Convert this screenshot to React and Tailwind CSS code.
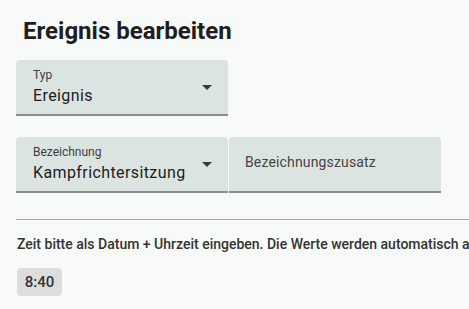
function DropArrow() {
  return (
    <svg width="24" height="24" viewBox="0 0 24 24" className="shrink-0 text-[#3a3a3a]">
      <path d="M7 10l5 5 5-5z" fill="currentColor" />
    </svg>
  );
}

function SelectField({ label, value }) {
  return (
    <div className="flex w-[212px] items-center rounded-t-[4px] border-b-2 border-[#858e8c] bg-[#dce4e2] pl-[17px] pr-[9px]">
      <div className="flex-1 pt-[7px] pb-[6px]">
        <div className="text-[12px] leading-[16px] text-[#3c3c3c]">{label}</div>
        <div className="mt-px text-[16px] leading-[24px] tracking-[0.4px] text-[#1c1c1c]">{value}</div>
      </div>
      <DropArrow />
    </div>
  );
}

function TextField({ placeholder }) {
  return (
    <div className="flex w-[212px] items-center rounded-t-[4px] border-b-2 border-[#858e8c] bg-[#dce4e2] pl-[16px] pr-3 pb-[5px]">
      <span className="text-[14px] leading-[20px] tracking-[0.15px] text-[#444]">{placeholder}</span>
    </div>
  );
}

export default function App() {
  return (
    <div className="h-[309px] w-[469px] overflow-hidden bg-[#f8f9f9] font-['Roboto',sans-serif]">
      <h1 className="pt-[15px] pl-[23px] text-[24px] leading-[32px] font-bold text-[#1e1e1e]">
        Ereignis bearbeiten
      </h1>

      <div className="mt-[13px] pl-[16px]">
        <SelectField label="Typ" value="Ereignis" />
      </div>

      <div className="mt-[21px] flex pl-[16px]">
        <SelectField label="Bezeichnung" value="Kampfrichtersitzung" />
        <div className="w-px" />
        <TextField placeholder="Bezeichnungszusatz" />
      </div>

      <div className="mt-[26px] ml-[16px] border-b border-[#a6a6ae]" />

      <p className="mt-[14px] pl-[17px] text-[14px] leading-[20px] font-medium whitespace-nowrap text-[#333]">
        Zeit bitte als Datum + Uhrzeit eingeben. Die Werte werden automatisch angepasst.
      </p>

      <div className="mt-[14px] pl-[17px]">
        <span className="inline-flex h-[28px] w-[45px] items-center justify-center rounded-[4px] bg-[#dddddd] text-[15px] font-medium text-[#333]">
          8:40
        </span>
      </div>
    </div>
  );
}
